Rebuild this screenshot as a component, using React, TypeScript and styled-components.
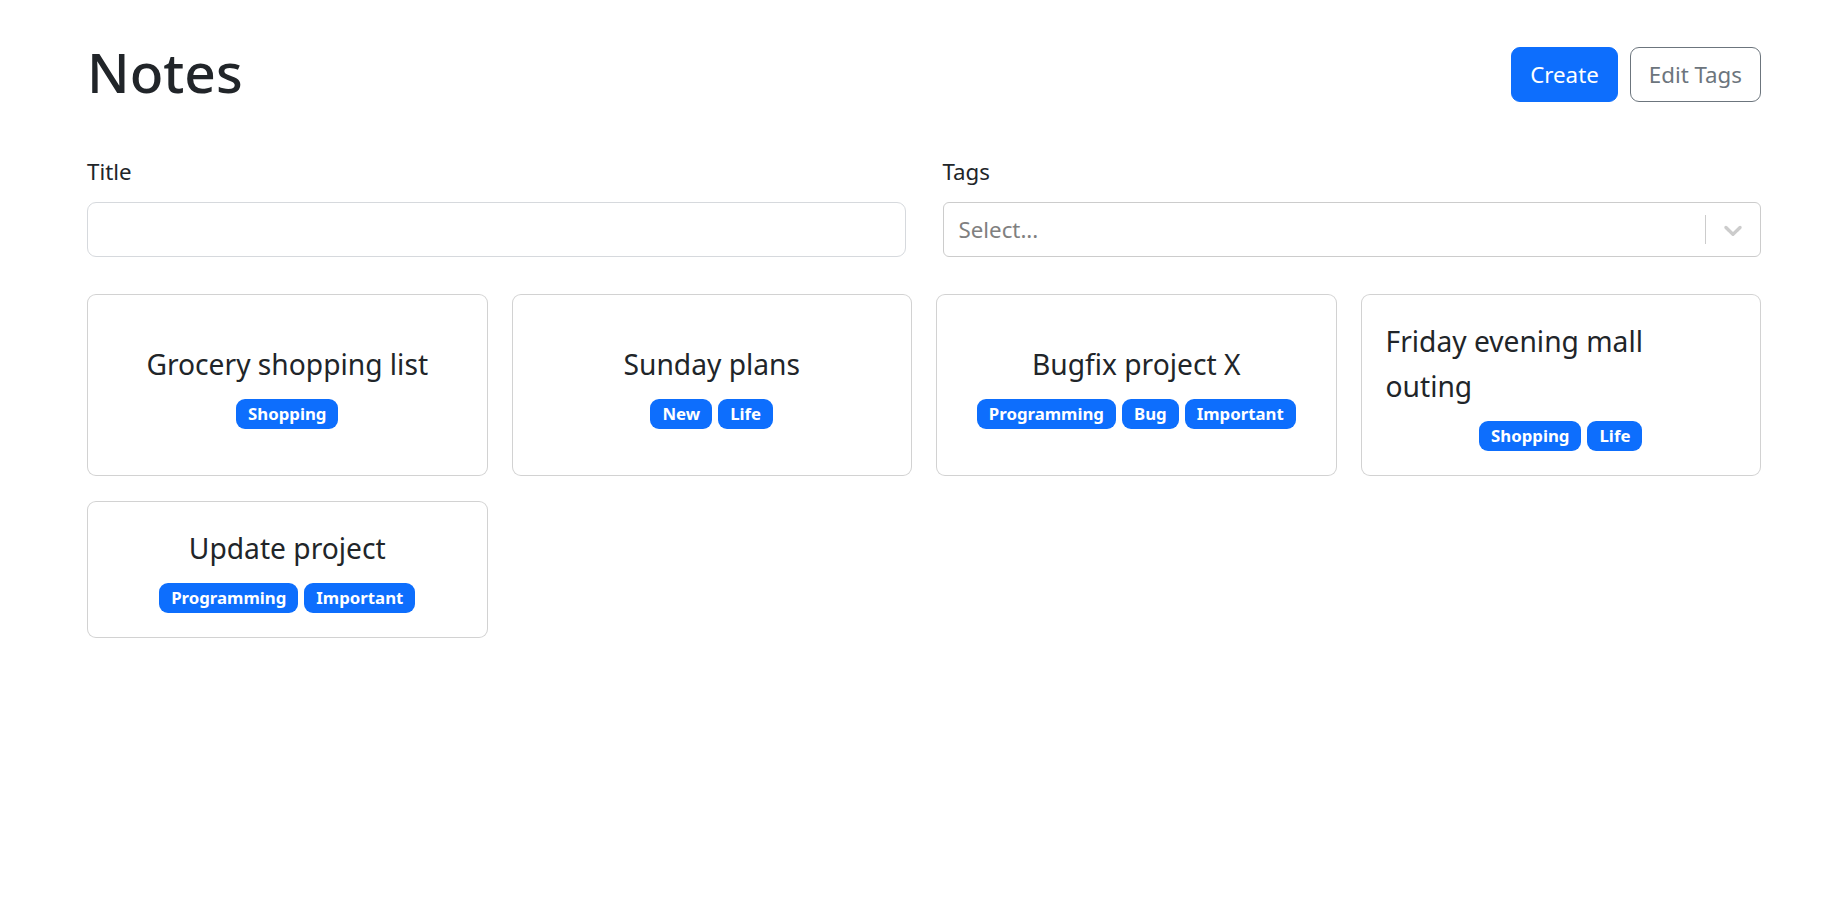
import React from "react";
import styled, { createGlobalStyle, css } from "styled-components";

const GlobalStyle = createGlobalStyle`
  *, *::before, *::after { box-sizing: border-box; }
  html, body { margin: 0; padding: 0; background: #ffffff; }
  body {
    font-family: "Noto Sans", "Open Sans", "DejaVu Sans", sans-serif;
    color: #212529;
    font-size: 22.3px;
    line-height: 1.5;
  }
`;

const Page = styled.main`
  padding: 36px 83px 0 87px;
`;

const Header = styled.header`
  display: flex;
  align-items: center;
  justify-content: space-between;
  margin-bottom: 41px;
`;

const Heading = styled.h1`
  margin: 0 0 5px 0;
  font-size: 55px;
  line-height: 72px;
  font-weight: 500;
  color: #212529;
`;

const Actions = styled.div`
  display: flex;
  gap: 12px;
`;

const Button = styled.button<{ $variant: "primary" | "outline" }>`
  display: inline-flex;
  align-items: center;
  justify-content: center;
  height: 55px;
  padding: 0 18px;
  font-family: inherit;
  font-size: 22.3px;
  line-height: 36px;
  border-radius: 9px;
  cursor: pointer;
  ${(p) =>
    p.$variant === "primary"
      ? css`
          background: #0d6efd;
          border: 1px solid #0d6efd;
          color: #ffffff;
        `
      : css`
          background: #ffffff;
          border: 1px solid #6c757d;
          color: #6c757d;
        `}
`;

const Filters = styled.section`
  display: grid;
  grid-template-columns: 1fr 1fr;
  column-gap: 37px;
  margin-bottom: 37px;
`;

const Field = styled.div`
  display: flex;
  flex-direction: column;
`;

const Label = styled.label`
  font-size: 22.3px;
  line-height: 36px;
  margin-bottom: 12px;
  color: #212529;
`;

const TextInput = styled.input`
  height: 55px;
  width: 100%;
  padding: 0 18px;
  font-family: inherit;
  font-size: 22.3px;
  border: 1px solid #d6d9dd;
  border-radius: 9px;
  outline: none;
  background: #fff;
`;

const SelectControl = styled.div`
  display: flex;
  align-items: stretch;
  height: 55px;
  border: 1px solid #cccccc;
  border-radius: 6px;
  background: #fff;
`;

const ValueArea = styled.div`
  flex: 1;
  display: flex;
  align-items: center;
  padding: 0 15px;
`;

const Placeholder = styled.span`
  color: #808080;
  font-size: 22.3px;
  line-height: 36px;
`;

const Indicators = styled.div`
  display: flex;
  align-items: center;
`;

const Separator = styled.span`
  align-self: stretch;
  width: 1px;
  margin: 12px 0;
  background: #cccccc;
`;

const DropIndicator = styled.span`
  display: flex;
  padding: 12px;
  color: #cccccc;
`;

const CardGrid = styled.section`
  display: grid;
  grid-template-columns: repeat(4, 1fr);
  gap: 25px 24px;
`;

const Card = styled.article`
  display: flex;
  flex-direction: column;
  align-items: center;
  justify-content: center;
  gap: 12px;
  padding: 24px;
  border: 1px solid rgba(0, 0, 0, 0.175);
  border-radius: 9px;
  background: #fff;
`;

const CardTitle = styled.span`
  font-size: 28.2px;
  line-height: 45px;
  color: #212529;
`;

const TagRow = styled.div`
  display: flex;
  flex-wrap: wrap;
  justify-content: center;
  gap: 6px;
`;

const Badge = styled.span`
  display: inline-block;
  padding: 6px 12px;
  font-size: 16.8px;
  line-height: 18px;
  font-weight: 700;
  color: #ffffff;
  background: #0d6efd;
  border-radius: 9px;
  white-space: nowrap;
`;

const Chevron = () => (
  <svg width="30" height="30" viewBox="0 0 20 20" fill="currentColor" aria-hidden="true">
    <path d="M4.516 7.548c0.436-0.446 1.043-0.481 1.576 0l3.908 3.747 3.908-3.747c0.533-0.481 1.141-0.446 1.574 0 0.436 0.445 0.408 1.197 0 1.615-0.406 0.418-4.695 4.502-4.695 4.502-0.217 0.223-0.502 0.335-0.787 0.335s-0.57-0.112-0.789-0.335c0 0-4.287-4.084-4.695-4.502s-0.436-1.17 0-1.615z" />
  </svg>
);

const notes = [
  { title: "Grocery shopping list", tags: ["Shopping"] },
  { title: "Sunday plans", tags: ["New", "Life"] },
  { title: "Bugfix project X", tags: ["Programming", "Bug", "Important"] },
  { title: "Friday evening mall outing", tags: ["Shopping", "Life"] },
  { title: "Update project", tags: ["Programming", "Important"] },
];

export default function App() {
  return (
    <>
      <GlobalStyle />
      <Page>
        <Header>
          <Heading>Notes</Heading>
          <Actions>
            <Button $variant="primary">Create</Button>
            <Button $variant="outline">Edit Tags</Button>
          </Actions>
        </Header>
        <Filters>
          <Field>
            <Label htmlFor="title">Title</Label>
            <TextInput id="title" type="text" />
          </Field>
          <Field>
            <Label>Tags</Label>
            <SelectControl>
              <ValueArea>
                <Placeholder>Select...</Placeholder>
              </ValueArea>
              <Indicators>
                <Separator />
                <DropIndicator>
                  <Chevron />
                </DropIndicator>
              </Indicators>
            </SelectControl>
          </Field>
        </Filters>
        <CardGrid>
          {notes.map((n) => (
            <Card key={n.title}>
              <CardTitle>{n.title}</CardTitle>
              <TagRow>
                {n.tags.map((t) => (
                  <Badge key={t}>{t}</Badge>
                ))}
              </TagRow>
            </Card>
          ))}
        </CardGrid>
      </Page>
    </>
  );
}
